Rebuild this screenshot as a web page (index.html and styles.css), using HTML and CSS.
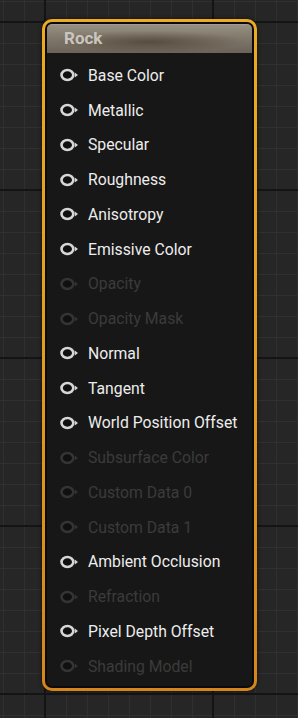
FILE: index.html
```html
<!DOCTYPE html>
<html lang="en">
<head>
    <meta charset="UTF-8">
    <meta name="viewport" content="width=device-width, initial-scale=1.0">
    <title>Material Node</title>
    <link rel="stylesheet" href="styles.css">
</head>
<body>
    <svg class="defs" width="0" height="0">
        <symbol id="pin" viewBox="0 0 20 14">
            <ellipse cx="7.4" cy="7" rx="5.9" ry="5" fill="#101010" stroke="currentColor" stroke-width="2.6"/>
            <polygon points="14.8,4.6 18,7 14.8,9.4" fill="currentColor"/>
        </symbol>
    </svg>

    <div class="node">
        <div class="node-inner">
            <div class="node-header">Rock</div>
            <div class="node-body">
                <div class="row"><svg class="pin"><use href="#pin"/></svg><span>Base Color</span></div>
                <div class="row"><svg class="pin"><use href="#pin"/></svg><span>Metallic</span></div>
                <div class="row"><svg class="pin"><use href="#pin"/></svg><span>Specular</span></div>
                <div class="row"><svg class="pin"><use href="#pin"/></svg><span>Roughness</span></div>
                <div class="row"><svg class="pin"><use href="#pin"/></svg><span>Anisotropy</span></div>
                <div class="row"><svg class="pin"><use href="#pin"/></svg><span>Emissive Color</span></div>
                <div class="row off"><svg class="pin"><use href="#pin"/></svg><span>Opacity</span></div>
                <div class="row off"><svg class="pin"><use href="#pin"/></svg><span>Opacity Mask</span></div>
                <div class="row"><svg class="pin"><use href="#pin"/></svg><span>Normal</span></div>
                <div class="row"><svg class="pin"><use href="#pin"/></svg><span>Tangent</span></div>
                <div class="row"><svg class="pin"><use href="#pin"/></svg><span>World Position Offset</span></div>
                <div class="row off"><svg class="pin"><use href="#pin"/></svg><span>Subsurface Color</span></div>
                <div class="row off"><svg class="pin"><use href="#pin"/></svg><span>Custom Data 0</span></div>
                <div class="row off"><svg class="pin"><use href="#pin"/></svg><span>Custom Data 1</span></div>
                <div class="row"><svg class="pin"><use href="#pin"/></svg><span>Ambient Occlusion</span></div>
                <div class="row off"><svg class="pin"><use href="#pin"/></svg><span>Refraction</span></div>
                <div class="row"><svg class="pin"><use href="#pin"/></svg><span>Pixel Depth Offset</span></div>
                <div class="row off"><svg class="pin"><use href="#pin"/></svg><span>Shading Model</span></div>
            </div>
        </div>
    </div>
</body>
</html>
```

FILE: styles.css
```css
html, body {
    height: 100%;
}

body {
    margin: 0;
    font-family: Roboto, "Liberation Sans", sans-serif;
    background-color: #262626;
    background-image:
        linear-gradient(#141414 2px, transparent 2px),
        linear-gradient(90deg, #141414 2px, transparent 2px),
        linear-gradient(#303030 1px, transparent 1px),
        linear-gradient(90deg, #303030 1px, transparent 1px);
    background-size: 298px 168px, 168px 718px, 21px 21px, 21px 21px;
    background-position: 0 21px, 44px 0, 0 1px, 3px 0;
    overflow: hidden;
}

.defs {
    position: absolute;
}

.node {
    width: 215px;
    margin: 19px 0 0 42px;
    padding: 3px;
    box-sizing: border-box;
    border-radius: 10px;
    background: linear-gradient(180deg, #ecab22 0%, #e39d1f 50%, #d6851b 100%);
    box-shadow: 0 0 4px rgba(0,0,0,0.6);
}

.node-inner {
    padding: 2px;
    border-radius: 7px;
    background-color: #0b0b0b;
}

.node-header {
    height: 29px;
    padding-left: 17px;
    box-sizing: border-box;
    border-radius: 5px 5px 0 0;
    border-top: 1px solid #a39c90;
    color: #cac6bf;
    font-weight: bold;
    font-size: 17px;
    line-height: 27px;
    background:
        radial-gradient(ellipse 95px 11px at 50% 60%, rgba(70,56,42,0.65), rgba(70,56,42,0) 100%),
        linear-gradient(180deg, #978f82 0%, #82796d 45%, #6b6358 100%);
}

.node-body {
    padding: 5px 0 2.5px;
    border-radius: 0 0 5px 5px;
    background-color: #171717;
}

.row {
    height: 34.75px;
    display: flex;
    align-items: center;
    gap: 8px;
    padding-left: 13px;
    color: #ededed;
    font-size: 15.75px;
}

.pin {
    width: 20px;
    height: 14px;
    color: #d6d6d6;
    flex: none;
}

.row.off {
    color: #3b3b3b;
}

.row.off .pin {
    color: #343434;
}
```
